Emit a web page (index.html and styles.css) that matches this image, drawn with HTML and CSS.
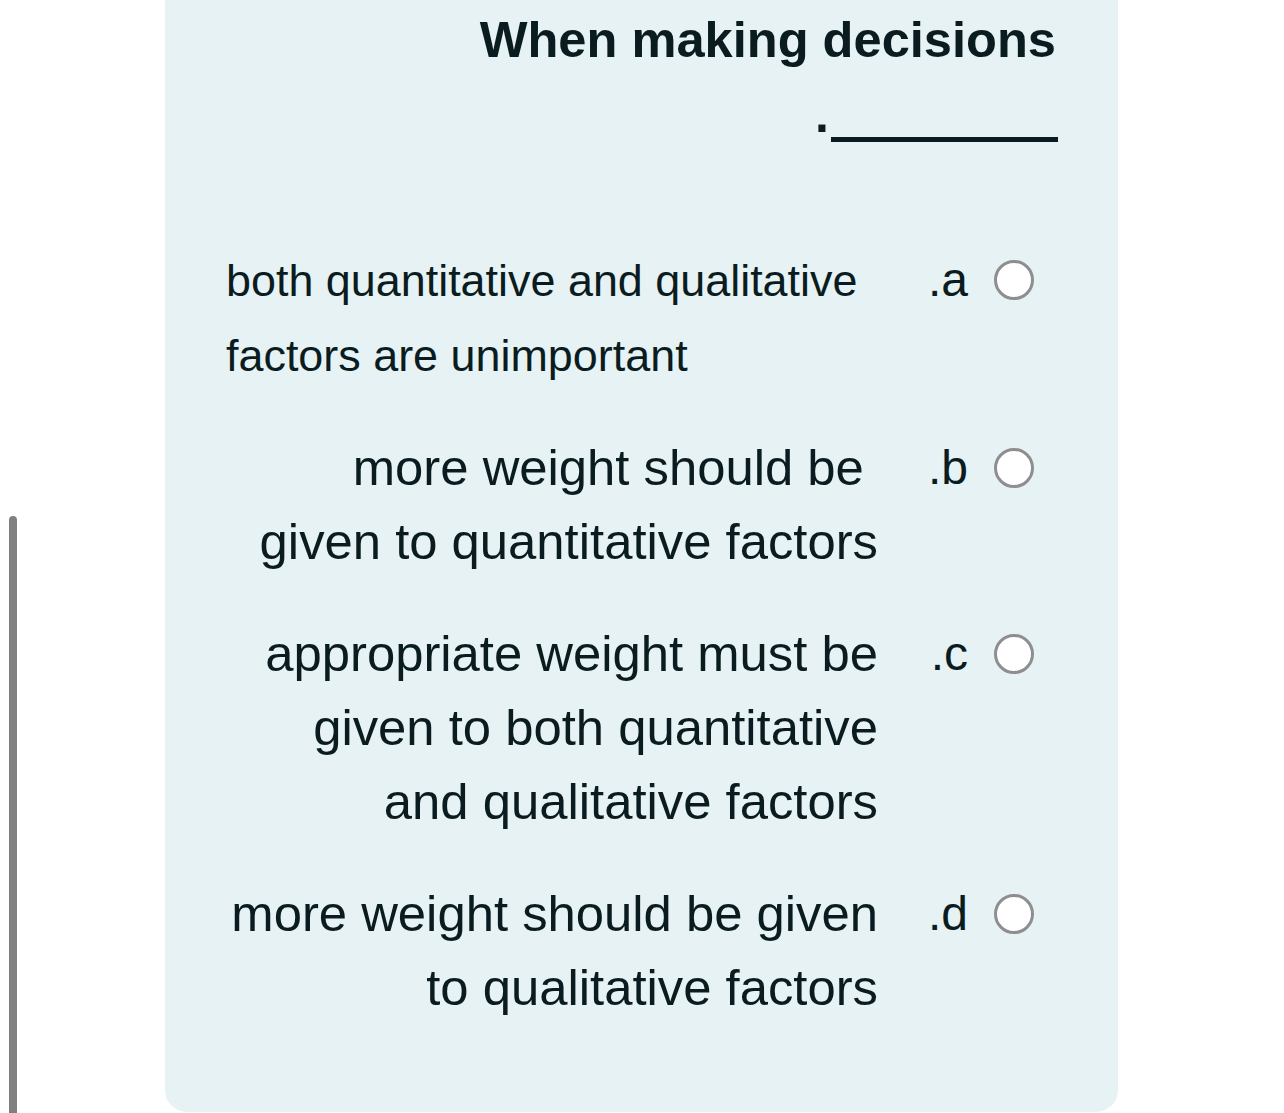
FILE: index.html
```html
<!DOCTYPE html>
<html lang="en">
<head>
<meta charset="utf-8">
<title>Question</title>
<link rel="stylesheet" href="styles.css">
</head>
<body>
<div class="scrollbar"></div>
<main class="card">
  <h1 class="title">When making decisions</h1>
  <div class="blank"><span class="dot">.</span><span class="line"></span></div>
  <div class="options">
    <div class="option">
      <div class="text text-left small">both quantitative and qualitative<br>factors are unimportant</div>
      <div class="label">.a</div>
      <div class="radio"></div>
    </div>
    <div class="option">
      <div class="text">more weight should be&nbsp;<br>given to quantitative factors</div>
      <div class="label">.b</div>
      <div class="radio"></div>
    </div>
    <div class="option">
      <div class="text">appropriate weight must be<br>given to both quantitative<br>and qualitative factors</div>
      <div class="label">.c</div>
      <div class="radio"></div>
    </div>
    <div class="option">
      <div class="text">more weight should be given<br>to qualitative factors</div>
      <div class="label">.d</div>
      <div class="radio"></div>
    </div>
  </div>
</main>
</body>
</html>
```

FILE: styles.css
```css
html, body {
  margin: 0;
  padding: 0;
  background: #ffffff;
}
body {
  font-family: "Liberation Sans", Arial, sans-serif;
  color: #0b1c21;
  height: 1113px;
  overflow: hidden;
  position: relative;
}
.scrollbar {
  position: absolute;
  left: 9px;
  top: 516px;
  width: 8px;
  height: 600px;
  background: #808080;
  border-radius: 4px 4px 0 0;
}
.card {
  margin-left: 165px;
  width: 953px;
  height: 1112px;
  background: #e6f2f4;
  border-radius: 0 0 22px 22px;
  box-sizing: border-box;
  padding-top: 4px;
  padding-right: 62px;
}
.title {
  margin: 0;
  font-size: 50.6px;
  font-weight: bold;
  line-height: 72px;
  text-align: right;
}
.blank {
  padding-top: 3px;
  margin-right: -2px;
  font-size: 50px;
  font-weight: bold;
  line-height: 72px;
  text-align: right;
}
.line {
  display: inline-block;
  width: 227px;
  height: 0;
  margin-left: 2px;
  margin-bottom: -10px;
  border-bottom: 5px solid #0b1c21;
}
.options {
  margin-top: 92px;
  margin-right: 22px;
  display: flex;
  flex-direction: column;
  gap: 38px;
}
.option {
  display: flex;
  justify-content: flex-end;
  align-items: flex-start;
}
.text {
  width: 652px;
  font-size: 50.8px;
  line-height: 74px;
  text-align: right;
}
.text-left {
  text-align: left;
}
.small {
  font-size: 44.9px;
  line-height: 75px;
}
.label {
  width: 90px;
  font-size: 48px;
  line-height: 74px;
  text-align: right;
}
.radio {
  width: 34px;
  height: 34px;
  margin-left: 26px;
  margin-top: 17px;
  border: 3px solid #8e8e90;
  border-radius: 50%;
  background: #ffffff;
}
```
